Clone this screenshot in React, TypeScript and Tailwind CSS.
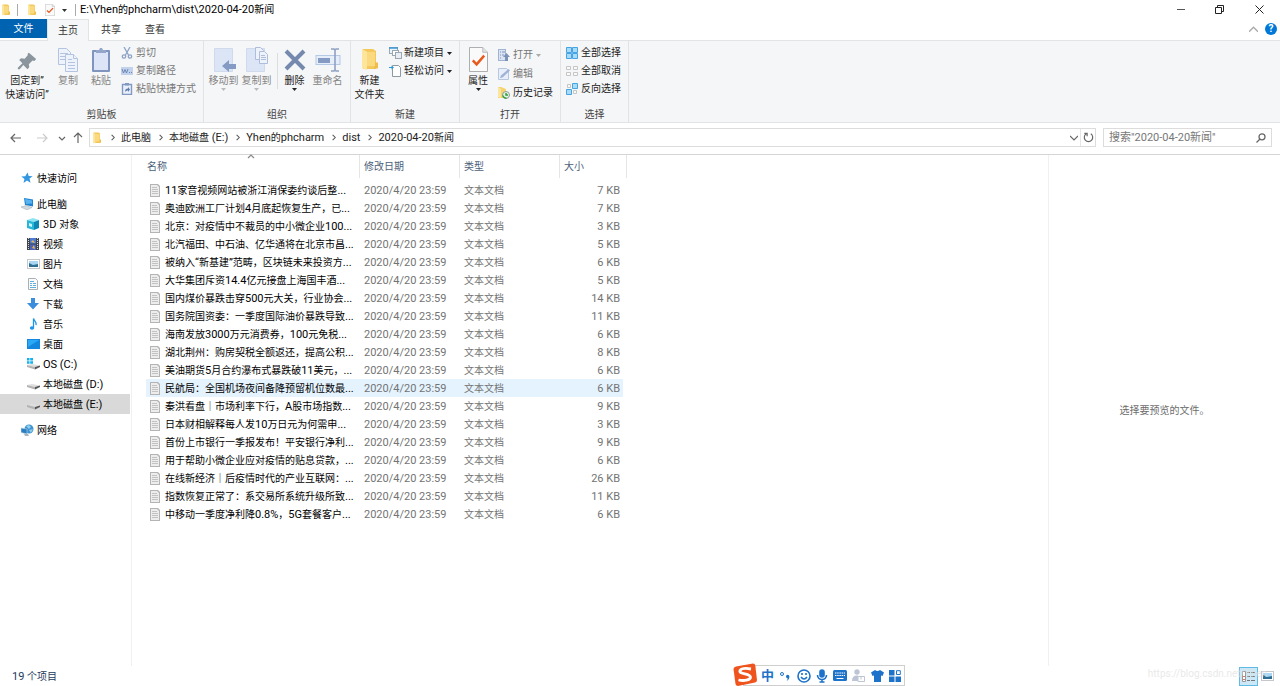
import React, { useState } from 'react';

interface FileRow {
  name: string;
  size: string;
}

const files: FileRow[] = [
  { name: '11家音视频网站被浙江消保委约谈后整...', size: '7 KB' },
  { name: '奥迪欧洲工厂计划4月底起恢复生产，已...', size: '7 KB' },
  { name: '北京：对疫情中不裁员的中小微企业100...', size: '3 KB' },
  { name: '北汽福田、中石油、亿华通将在北京市昌...', size: '5 KB' },
  { name: '被纳入“新基建”范畴，区块链未来投资方...', size: '6 KB' },
  { name: '大华集团斥资14.4亿元接盘上海国丰酒...', size: '5 KB' },
  { name: '国内煤价暴跌击穿500元大关，行业协会...', size: '14 KB' },
  { name: '国务院国资委：一季度国际油价暴跌导致...', size: '11 KB' },
  { name: '海南发放3000万元消费券，100元免税...', size: '6 KB' },
  { name: '湖北荆州：购房契税全额返还，提高公积...', size: '8 KB' },
  { name: '美油期货5月合约瀑布式暴跌破11美元，...', size: '6 KB' },
  { name: '民航局：全国机场夜间备降预留机位数最...', size: '6 KB' },
  { name: '秦洪看盘｜市场利率下行，A股市场指数...', size: '9 KB' },
  { name: '日本财相解释每人发10万日元为何需申...', size: '3 KB' },
  { name: '首份上市银行一季报发布！平安银行净利...', size: '9 KB' },
  { name: '用于帮助小微企业应对疫情的贴息贷款，...', size: '6 KB' },
  { name: '在线新经济｜后疫情时代的产业互联网：...', size: '26 KB' },
  { name: '指数恢复正常了：系交易所系统升级所致...', size: '11 KB' },
  { name: '中移动一季度净利降0.8%，5G套餐客户...', size: '6 KB' },
];

const crumbs = ['此电脑', '本地磁盘 (E:)', 'Yhen的phcharm', 'dist', '2020-04-20新闻'];

// Latin runs are set one pixel larger than the Chinese around them
const Mixed = ({ text }: { text: string }) => (
  <>
    {text.split(/([\x20-\x7e“”]+)/).map((part, i) =>
      i % 2 ? <span key={i} className="text-[11px] whitespace-pre">{part}</span> : part
    )}
  </>
);

const FolderIcon = ({ className = 'w-3 h-3' }: { className?: string }) => (
  <svg viewBox="0 0 16 24" preserveAspectRatio="none" className={className}>
    <path d="M1 1h10l3 2v19H1z" fill="#f3c75b" />
    <path d="M12 15h4v6l-4 1z" fill="#eebd4a" />
    <path d="M0 1l5 3v19l-5-2z" fill="#fde59b" />
    <path d="M5 4h8v15H5z" fill="#fad97f" />
  </svg>
);

const PinIcon = () => (
  <svg viewBox="0 0 24 24" className="w-[22px] h-[22px]" fill="#8b959d">
    <path d="M14 4l8 7-2 2-2-.5-4 4 .5 3.500-2 2-4.500-4.500L4 22H2v-1.500l5-5L3.500 12l2-2 4 .5 3.500-4-.5-1z" />
  </svg>
);

const CopyIcon = () => (
  <svg viewBox="0 0 24 26" className="w-6 h-[26px]" stroke="#b3c3e0" fill="#edf2fb">
    <path d="M2.500 1.500h8l4 4v12h-12z" />
    <path d="M4 6.500h8M4 9.500h8M4 12.500h5" />
    <path d="M9.500 7.500h8l4 4v13h-12z" />
    <path d="M17.500 7.500v4h4M12 12.500h4M12 15.500h7M12 18.500h7M12 21.500h7" />
  </svg>
);

const PasteIcon = () => (
  <svg viewBox="0 0 24 26" className="w-6 h-[26px]">
    <rect x="3" y="3" width="18" height="22" rx="1" fill="#7f95bd" />
    <rect x="5" y="5" width="14" height="18" fill="#dbe5f7" />
    <path d="M7 3h3l1-2h2l1 2h3v3H7z" fill="#94a6c9" />
  </svg>
);

const MoveToIcon = () => (
  <svg viewBox="0 0 24 26" className="w-6 h-[26px]">
    <path d="M2.500 1.500h18v23h-18z" fill="#dbe5f6" stroke="#cfdaee" />
    <path d="M10 19l7-6v4h7v5h-7v3z" fill="#859bc4" />
  </svg>
);

const CopyToIcon = () => (
  <svg viewBox="0 0 24 26" className="w-6 h-[26px]">
    <path d="M1.500 1.500h18v23h-18z" fill="#dbe5f6" stroke="#cfdaee" />
    <g stroke="#adbdda" fill="#eef3fb">
      <path d="M10.500.5h5l3 3v9h-8z" />
      <path d="M14.500 4.500h5l3 3v9h-8z" />
      <path d="M16 8.500h4M16 10.500h5M16 12.500h5" />
    </g>
  </svg>
);

const DeleteIcon = () => (
  <svg viewBox="0 0 24 26" className="w-6 h-[26px]">
    <path d="M3 4l18 18M21 4L3 22" stroke="#7588ae" strokeWidth="4" />
  </svg>
);

const RenameIcon = () => (
  <svg viewBox="0 0 26 26" className="w-[26px] h-[26px]">
    <rect x="1" y="8.500" width="24" height="9" fill="#e6eefa" stroke="#b5c8e6" />
    <rect x="3" y="11" width="12" height="5" fill="#859bc4" />
    <path d="M16 2h3l1 1 1-1h3M20 3v20M16 24h3l1-1 1 1h3" stroke="#8fa1c4" strokeWidth="1.600" fill="none" />
  </svg>
);

const CheckPageIcon = ({ className }: { className: string }) => (
  <svg viewBox="0 0 20 26" className={className} preserveAspectRatio="none">
    <path d="M.5.500h14l5 5v20H.5z" fill="#fafafa" stroke="#a9a9a9" />
    <path d="M14.500.500v5h5" fill="#e4e4e4" stroke="#b9b9b9" />
    <path d="M4 14l4 4 8-9" stroke="#e8591c" strokeWidth="2.600" fill="none" />
  </svg>
);

const ScissorsIcon = () => (
  <svg viewBox="0 0 12 12" className="w-3 h-3" fill="none" stroke="#8ea3c8" strokeWidth="1.300">
    <path d="M3 0l4.500 8M9 0L4.500 8" />
    <circle cx="3" cy="9.500" r="1.700" />
    <circle cx="9" cy="9.500" r="1.700" />
  </svg>
);

const PathIcon = () => (
  <svg viewBox="0 0 12 12" className="w-3 h-3">
    <rect y="2" width="12" height="8" fill="#c3d2ec" />
    <path d="M1 4l1.500 4L4 4.500 5.500 8 7 4M8 7.500h1M10 7.500h1" stroke="#6f87b3" fill="none" />
  </svg>
);

const ShortcutIcon = () => (
  <svg viewBox="0 0 12 12" className="w-3 h-3">
    <path d="M1.500 1.500h9v10h-9z" fill="#eaf0fa" stroke="#8399c2" strokeWidth="1.400" />
    <path d="M4 0h4v2.500H4z" fill="#8399c2" />
    <path d="M4 9c0-2.500 1-3.500 3-3.500V4l2 2.500L7 9V7.500C5.500 7.500 5 8 4 9z" fill="#5f7cb0" />
  </svg>
);

const NewItemIcon = () => (
  <svg viewBox="0 0 13 12" className="w-[13px] h-3">
    <rect x=".5" y=".5" width="8" height="6" fill="#eaf4fc" stroke="#9aa8b1" />
    <path d="M0 1h9" stroke="#3c97d4" strokeWidth="1.500" />
    <rect x="3.500" y="3.500" width="6" height="5" fill="#fff" stroke="#9aa8b1" />
    <rect x="6.500" y="5.500" width="6" height="6" fill="#e8eef4" stroke="#9aa8b1" />
  </svg>
);

const EasyAccessIcon = () => (
  <svg viewBox="0 0 13 12" className="w-[13px] h-3">
    <path d="M3.500.5h6l2 2v9h-8z" fill="#fff" stroke="#8d9aa3" />
    <path d="M0 2.500h4" stroke="#2f9bdc" />
    <path d="M2.500.5l2.500 2-2.500 2z" fill="#2f9bdc" />
  </svg>
);

const OpenIcon = () => (
  <svg viewBox="0 0 12 12" className="w-3 h-3">
    <rect x=".5" y=".5" width="7" height="11" fill="#dbe4f3" stroke="#a2b3d2" />
    <path d="M2 3h1M2 6h1M2 9h1M4 3h3M4 6h2" stroke="#7e92b8" />
    <path d="M8.500 4L12 8h-2v4H7V8H5z" fill="#7e92b8" />
  </svg>
);

const EditIcon = () => (
  <svg viewBox="0 0 12 12" className="w-3 h-3">
    <path d="M.5.500h8l2 2v9H.5z" fill="#e9effa" stroke="#b8c7e0" />
    <path d="M2 10l1-2.500L10.500 1 12 2.500 4.500 9.500z" fill="#9fb2d6" />
  </svg>
);

const HistoryIcon = () => (
  <svg viewBox="0 0 12 12" className="w-3 h-3">
    <path d="M0 0h3l5 2v9H0z" fill="#f6d36f" />
    <path d="M0 0l3 2v9l-3-1z" fill="#fbe6a0" />
    <circle cx="8" cy="8" r="3.500" fill="#e8f3e8" stroke="#8d9b8f" />
    <path d="M5 8.500A3 3 0 0 0 8.500 11M8 6v2h2" stroke="#2fa33c" strokeWidth="1.500" fill="none" />
  </svg>
);

const SelectAllIcon = () => (
  <svg viewBox="0 0 12 12" className="w-3 h-3" fill="#a9dbf8" stroke="#46a4e2">
    <path d="M.5.500h5v5h-5zM6.500.500h5v5h-5zM.5 6.500h5v5h-5zM6.500 6.500h5v5h-5z" />
  </svg>
);

const SelectNoneIcon = () => (
  <svg viewBox="0 0 12 12" className="w-3 h-3" fill="#fafafa" stroke="#c5c5c5">
    <path d="M.5 1.500h4v3h-4zM7.500 1.500h4v3h-4zM.5 7.500h4v3h-4zM7.500 7.500h4v3h-4z" />
  </svg>
);

const InvertIcon = () => (
  <svg viewBox="0 0 12 12" className="w-3 h-3">
    <path d="M1.500 1.500h3v3h-3zM7.500 7.500h3v3h-3z" fill="#fafafa" stroke="#c5c5c5" />
    <path d="M6.500.500h5v5h-5zM.5 6.500h5v5h-5z" fill="#a9dbf8" stroke="#46a4e2" />
  </svg>
);

const TextFileIcon = () => (
  <svg viewBox="0 0 10 13" className="w-[10px] h-[13px] shrink-0">
    <path d="M0 0h8l2 2v11H0z" fill="#b4b4b4" />
    <path d="M1 1h6l2 2v9H1z" fill="#ededed" />
    <path d="M2 3.500h5M2 5.500h6M2 7.500h6M2 9.500h6" stroke="#c2c2c2" />
  </svg>
);

const StarIcon = () => (
  <svg viewBox="0 0 12 12" className="w-3 h-3">
    <path d="M6.500.5l1.200 3.600 4 .2-3.200 2.300 1 4.200L6 8.500 2.500 11l1-4L.3 4.500l4-.3z" fill="#3296e0" />
  </svg>
);

const PcIcon = () => (
  <svg viewBox="0 0 13 12" className="w-[13px] h-3">
    <path d="M3 0l9 1.500v7L4 7z" fill="#1f83cf" />
    <path d="M4 1l7 1.500v3L5 6z" fill="#58b4f0" />
    <path d="M0 9l5-1.500 6 2L6 12z" fill="#d0d9df" stroke="#9aa8b3" strokeWidth=".5" />
  </svg>
);

const CubeIcon = () => (
  <svg viewBox="0 0 12 12" className="w-3 h-3">
    <path d="M0 2l6-2 6 2-5 2z" fill="#8de4f3" />
    <path d="M0 2l7 2v8L0 10z" fill="#25b6d8" />
    <path d="M7 4l5-2v8l-5 2z" fill="#0c86b4" />
    <path d="M2 5l3 1v3L2 8z" fill="#c8f3fa" />
  </svg>
);

const VideoIcon = () => (
  <svg viewBox="0 0 12 12" className="w-3 h-3">
    <rect width="12" height="12" fill="#3f4550" />
    <rect x="3" y="0" width="6" height="5.500" fill="#4d7bd0" />
    <rect x="3" y="6.500" width="6" height="5.500" fill="#4a63b8" />
    <path d="M4 4l2-2 2 3zM5 10l2-3 1 4z" fill="#e8b74a" />
    <path d="M1.500 0v12M10.500 0v12" stroke="#d5d8dd" strokeDasharray="1 1" />
  </svg>
);

const PictureIcon = () => (
  <svg viewBox="0 0 13 10" className="w-[13px] h-[10px]">
    <rect x=".5" y=".5" width="12" height="9" fill="#fff" stroke="#c4c8cb" />
    <rect x="2" y="2" width="9" height="6" fill="#a8d6f3" />
    <path d="M2 4l4 2 5-1v3H2z" fill="#2f6f92" />
  </svg>
);

const DocIcon = () => (
  <svg viewBox="0 0 12 12" className="w-3 h-3">
    <path d="M1.500.5h7l2 2v9h-9z" fill="#fbfbfb" stroke="#a8b0b6" />
    <path d="M3 3.500h4M3 5.500h2M6 5.500h3M3 7.500h2M6 7.500h3M3 9.500h6" stroke="#62aede" />
  </svg>
);

const DownloadIcon = () => (
  <svg viewBox="0 0 12 12" className="w-3 h-3">
    <path d="M4 0h4v5h4l-6 6.500L0 5h4z" fill="#3b8ede" />
  </svg>
);

const MusicIcon = () => (
  <svg viewBox="0 0 12 12" className="w-3 h-3">
    <path d="M6.500 9.500V.5C7 3 10 3.500 9 7" stroke="#1e96e6" strokeWidth="1.300" fill="none" />
    <ellipse cx="5" cy="10" rx="2.200" ry="1.800" fill="#1e96e6" />
  </svg>
);

const DesktopIcon = () => (
  <svg viewBox="0 0 13 10" className="w-[13px] h-[10px]">
    <rect width="13" height="10" fill="#1387dd" />
    <path d="M1 1h11L1 8z" fill="#2ba8f6" />
  </svg>
);

const DriveIcon = ({ windows = false }: { windows?: boolean }) => (
  <svg viewBox="0 0 13 12" className="w-[13px] h-3">
    {windows && <path d="M0 0h2.500v2.500H0zM3.200 0H6v2.500H3.200zM0 3.200h2.500v2.500H0zM3.200 3.200H6v2.500H3.200z" fill="#14b0ee" />}
    <path d="M0 7l5-1 8 1.500-5 1.500z" fill="#dedede" />
    <path d="M0 7l8 2v2.500L0 9z" fill="#b3b3b3" />
    <path d="M8 9l5-1.500V9l-5 2.500z" fill="#575757" />
  </svg>
);

const NetworkIcon = () => (
  <svg viewBox="0 0 13 12" className="w-[13px] h-3">
    <circle cx="8" cy="5" r="4.500" fill="#3d93cf" />
    <path d="M5 2l3-1 2 2-2 2zM8 6l4-1-2 4z" fill="#8fcdee" />
    <path d="M0 4l6 1v5L0 8.500z" fill="#2a7fc2" stroke="#bcd3e2" strokeWidth=".6" />
    <path d="M3 10h4l1 2H4z" fill="#a9b5bd" />
  </svg>
);

const Chevron = ({ d, className = 'w-2 h-2 text-[#666]' }: { d: string; className?: string }) => (
  <svg viewBox="0 0 8 8" className={className} fill="none" stroke="currentColor" strokeWidth="1.200">
    <path d={d} />
  </svg>
);

const Caret = ({ className = 'text-[#333]' }: { className?: string }) => (
  <svg viewBox="0 0 5 3" className={`w-[5px] h-[3px] ${className}`} fill="currentColor">
    <path d="M0 0h5L2.500 3z" />
  </svg>
);

interface BigButtonProps {
  icon: React.ReactNode;
  lines: string[];
  width: string;
  muted?: boolean;
  caret?: boolean;
}

const BigButton = ({ icon, lines, width, muted, caret }: BigButtonProps) => (
  <button className={`${width} flex flex-col items-center pt-1 whitespace-nowrap ${muted ? 'text-[#858585]' : 'text-[#222]'}`}>
    <span className="h-[29px] flex items-center justify-center">{icon}</span>
    {lines.map((line) => (
      <span key={line} className="leading-[14px]">{line}</span>
    ))}
    {caret && <Caret className={muted ? 'text-[#bbb]' : 'text-[#222]'} />}
  </button>
);

const SmallButton = ({ icon, label, muted, caret }: { icon: React.ReactNode; label: string; muted?: boolean; caret?: boolean }) => (
  <button className={`h-4 flex items-center whitespace-nowrap ${muted ? 'text-[#777]' : 'text-[#222]'}`}>
    <span className="w-[15px] shrink-0">{icon}</span>
    {label}
    {caret && <span className="ml-[3px]"><Caret className={muted ? 'text-[#aaa]' : 'text-[#222]'} /></span>}
  </button>
);

const Group = ({ title, width, children }: { title: string; width: string; children: React.ReactNode }) => (
  <section className={`${width} shrink-0 flex flex-col border-r border-[#e2e3e4]`}>
    <div className="flex flex-1">{children}</div>
    <h2 className="h-[15px] leading-[15px] text-center text-[#444]">{title}</h2>
  </section>
);

const sideItems = [
  { label: '3D 对象', icon: <CubeIcon /> },
  { label: '视频', icon: <VideoIcon /> },
  { label: '图片', icon: <PictureIcon /> },
  { label: '文档', icon: <DocIcon /> },
  { label: '下载', icon: <DownloadIcon /> },
  { label: '音乐', icon: <MusicIcon /> },
  { label: '桌面', icon: <DesktopIcon /> },
  { label: 'OS (C:)', icon: <DriveIcon windows /> },
  { label: '本地磁盘 (D:)', icon: <DriveIcon /> },
  { label: '本地磁盘 (E:)', icon: <DriveIcon />, active: true },
];

const SideLink = ({ icon, label, nested, active }: { icon: React.ReactNode; label: string; nested?: boolean; active?: boolean }) => (
  <a
    href="#"
    className={`h-5 mr-px flex items-center whitespace-nowrap ${nested ? 'pl-[27px]' : 'pl-[21px]'} ${active ? 'bg-[#d9d9d9]' : ''}`}
  >
    <span className="w-4 shrink-0">{icon}</span>
    <span className="leading-4 pt-[2px]"><Mixed text={label} /></span>
  </a>
);

const TitleBar = () => (
  <header className="h-[19px] flex items-center pl-[2px] text-black">
    <FolderIcon className="w-2 h-3" />
    <span className="w-px h-3 bg-[#aaa] ml-[7px] mr-[10px]" />
    <FolderIcon className="w-2 h-3" />
    <CheckPageIcon className="w-[10px] h-3 ml-[9px]" />
    <span className="ml-[7px] pt-px"><Caret /></span>
    <span className="w-px h-3 bg-[#aaa] ml-2 mr-1" />
    <h1 className="flex-1"><Mixed text="E:\Yhen的phcharm\dist\2020-04-20新闻" /></h1>
    <button aria-label="最小化" className="w-[39px] h-full flex items-center justify-center">
      <span className="w-2 h-px bg-[#555]" />
    </button>
    <button aria-label="还原" className="w-[39px] h-full flex items-center justify-center">
      <svg viewBox="0 0 9 9" className="w-[9px] h-[9px]" fill="none" stroke="#222">
        <path d="M.5 2.500h6v6h-6zM2.500 2.500v-2h6v6h-2" />
      </svg>
    </button>
    <button aria-label="关闭" className="w-[41px] h-full flex items-center justify-center">
      <svg viewBox="0 0 9 9" className="w-[9px] h-[9px]" stroke="#222">
        <path d="M.5.500l8 8M8.500.500l-8 8" />
      </svg>
    </button>
  </header>
);

const Tabs = () => (
  <div className="h-[21px] flex items-start text-[#333]">
    <button className="w-[47px] h-[19px] pt-px bg-[#0063b1] text-white">文件</button>
    <button className="w-[42px] h-[22px] bg-[#f5f6f7] border border-b-0 border-[#e2e3e4] z-10">主页</button>
    <button className="w-11 h-[22px]">共享</button>
    <button className="w-11 h-[22px]">查看</button>
    <div className="flex-1 h-5 flex items-center justify-end gap-[7px] pr-[3px]">
      <Chevron d="M0 6l4-4 4 4" className="w-[9px] h-[9px] text-[#aaa]" />
      <button aria-label="帮助" className="w-3 h-3 rounded-full bg-[#0078d7] text-white text-[10px] leading-3 font-bold">?</button>
    </div>
  </div>
);

const Ribbon = () => (
  <div className="h-[83px] flex bg-[#f5f6f7] border-y border-[#e2e3e4]">
    <Group title="剪贴板" width="w-[204px]">
      <BigButton icon={<PinIcon />} lines={['固定到”', '快速访问”']} width="w-[54px]" />
      <BigButton icon={<CopyIcon />} lines={['复制']} width="w-7" muted />
      <BigButton icon={<PasteIcon />} lines={['粘贴']} width="w-[38px]" muted />
      <div className="flex flex-col gap-[2px] pt-1 pl-px">
        <SmallButton icon={<ScissorsIcon />} label="剪切" muted />
        <SmallButton icon={<PathIcon />} label="复制路径" muted />
        <SmallButton icon={<ShortcutIcon />} label="粘贴快捷方式" muted />
      </div>
    </Group>
    <Group title="组织" width="w-[147px]">
      <div className="flex pl-[3px]">
        <BigButton icon={<MoveToIcon />} lines={['移动到']} width="w-[33px]" muted caret />
        <BigButton icon={<CopyToIcon />} lines={['复制到']} width="w-[33px]" muted caret />
        <span className="w-px h-9 mt-3 ml-1 bg-[#dcdddf]" />
        <BigButton icon={<DeleteIcon />} lines={['删除']} width="w-[33px]" caret />
        <BigButton icon={<RenameIcon />} lines={['重命名']} width="w-[33px]" muted />
      </div>
    </Group>
    <Group title="新建" width="w-[109px]">
      <BigButton icon={<FolderIcon className="w-4 h-[23px]" />} lines={['新建', '文件夹']} width="w-[37px]" />
      <div className="flex flex-col gap-[2px] pt-1 pl-px">
        <SmallButton icon={<NewItemIcon />} label="新建项目" caret />
        <SmallButton icon={<EasyAccessIcon />} label="轻松访问" caret />
      </div>
    </Group>
    <Group title="打开" width="w-[101px]">
      <BigButton icon={<CheckPageIcon className="w-[19px] h-[25px]" />} lines={['属性']} width="w-9" caret />
      <div className="flex flex-col gap-[3px] pt-[6px] pl-[2px]">
        <SmallButton icon={<OpenIcon />} label="打开" muted caret />
        <SmallButton icon={<EditIcon />} label="编辑" muted />
        <SmallButton icon={<HistoryIcon />} label="历史记录" />
      </div>
    </Group>
    <Group title="选择" width="w-[68px]">
      <div className="flex flex-col gap-[2px] pt-1 pl-[5px]">
        <SmallButton icon={<SelectAllIcon />} label="全部选择" />
        <SmallButton icon={<SelectNoneIcon />} label="全部取消" />
        <SmallButton icon={<InvertIcon />} label="反向选择" />
      </div>
    </Group>
  </div>
);

const ArrowIcon = ({ d, className }: { d: string; className: string }) => (
  <svg viewBox="0 0 12 12" className={`w-3 h-3 ${className}`} fill="none" stroke="currentColor" strokeWidth="1.200">
    <path d={d} />
  </svg>
);

const AddressBar = () => {
  const [query, setQuery] = useState('');

  return (
    <div className="h-8 flex items-center pl-[10px] pr-2 pb-[2px] border-b border-[#d5d5d5] text-[#222]">
      <button aria-label="后退"><ArrowIcon d="M11 6H1M5 2L1 6l4 4" className="text-[#666]" /></button>
      <button aria-label="前进" className="ml-[14px]"><ArrowIcon d="M1 6h10M7 2l4 4-4 4" className="text-[#ccc]" /></button>
      <button aria-label="最近浏览的位置" className="ml-[10px]"><Chevron d="M1 3l3 3 3-3" /></button>
      <button aria-label="上移" className="ml-[6px]"><ArrowIcon d="M6 11V1M2 5l4-4 4 4" className="text-[#666]" /></button>
      <div className="flex-1 h-[19px] ml-[5px] flex items-center border border-[#dcdcdc] pl-[3px]">
        <FolderIcon className="w-2 h-3 mr-[2px]" />
        {crumbs.map((crumb) => (
          <React.Fragment key={crumb}>
            <span className="w-[18px] flex justify-center"><Chevron d="M3 1l3 3-3 3" className="w-[7px] h-[7px] text-[#555]" /></span>
            <a href="#"><Mixed text={crumb} /></a>
          </React.Fragment>
        ))}
        <button aria-label="历史地址" className="ml-auto mr-[2px]"><Chevron d="M0 2l4 4 4-4" /></button>
        <button aria-label="刷新" className="w-[15px] h-full flex items-center justify-center border-l border-[#e5e5e5]">
          <svg viewBox="0 0 12 12" className="w-[11px] h-[11px]" fill="none" stroke="#666" strokeWidth="1.300">
            <path d="M8.500 2a4.600 4.600 0 1 1-5 0M1.500 1.500h3v3" />
          </svg>
        </button>
      </div>
      <div className="w-[169px] h-[19px] ml-[7px] flex items-center border border-[#dcdcdc] px-[5px]">
        <input
          type="search"
          aria-label="搜索"
          placeholder={'搜索"2020-04-20新闻"'}
          value={query}
          onChange={(e) => setQuery(e.target.value)}
          className="flex-1 min-w-0 outline-none text-[11px] placeholder:text-[#777]"
        />
        <svg viewBox="0 0 10 10" className="w-[10px] h-[10px]" fill="none" stroke="#666" strokeWidth="1.300">
          <circle cx="6" cy="3.800" r="3" />
          <path d="M4 6L.5 9.500" />
        </svg>
      </div>
    </div>
  );
};

const Sidebar = () => (
  <nav className="w-[132px] shrink-0 border-r border-[#f0f0f0] pt-[13px] flex flex-col gap-[6px] text-black">
    <SideLink icon={<StarIcon />} label="快速访问" />
    <div>
      <SideLink icon={<PcIcon />} label="此电脑" />
      {sideItems.map((item) => (
        <SideLink key={item.label} {...item} nested />
      ))}
    </div>
    <SideLink icon={<NetworkIcon />} label="网络" />
  </nav>
);

const FileTable = () => {
  const [hovered, setHovered] = useState(11);
  const th = 'h-[23px] p-0 pl-1 font-normal text-left border-r border-[#e5e5e5]';

  return (
    <table className="w-[481px] table-fixed border-separate border-spacing-0 text-[#737373]">
      <thead className="text-[#4c607a]">
        <tr>
          <th className="w-[214px] h-[23px] p-0 pl-px font-normal text-left border-r border-[#e5e5e5] relative">
            名称
            <span className="absolute left-[101px] -top-px"><Chevron d="M1 4l3-3 3 3" className="w-2 h-2 text-[#888]" /></span>
          </th>
          <th className={`w-[100px] ${th}`}>修改日期</th>
          <th className={`w-[100px] ${th}`}>类型</th>
          <th className={`w-[67px] ${th}`}>大小</th>
        </tr>
      </thead>
      <tbody>
        <tr aria-hidden="true"><td colSpan={4} className="h-[3px] p-0" /></tr>
        {files.map((file, i) => (
          <tr key={file.name} onMouseEnter={() => setHovered(i)} className={hovered === i ? '[&>td]:bg-[#e5f3ff]' : ''}>
            <td className="h-[18px] p-0 pl-1 text-black">
              <div className="flex items-center gap-[5px] whitespace-nowrap">
                <TextFileIcon />
                <span className="leading-4 pt-[2px]"><Mixed text={file.name} /></span>
              </div>
            </td>
            <td className="p-0 pt-[2px] pl-1 leading-4 whitespace-nowrap"><Mixed text="2020/4/20 23:59" /></td>
            <td className="p-0 pt-[2px] pl-1 leading-4">文本文档</td>
            <td className="p-0 pt-[2px] pr-[3px] leading-4 text-right border-r-4 border-transparent bg-clip-padding"><Mixed text={file.size} /></td>
          </tr>
        ))}
      </tbody>
    </table>
  );
};

const StatusBar = () => (
  <footer className="h-5 flex items-center pl-3 pr-[6px] text-[#1e395b]">
    <span className="flex-1 leading-4 pt-[2px]"><Mixed text="19 个项目" /></span>
    <button aria-label="详细信息" className="w-[19px] h-[19px] flex items-center justify-center bg-[#cce8f6] border border-[#5fbbe4]">
      <svg viewBox="0 0 13 11" className="w-[13px] h-[11px]">
        <path d="M.5.500h3v10h-3z" fill="#fff" stroke="#999" />
        <path d="M1 5.500h2M1 8.500h2" stroke="#d67b6a" />
        <path d="M5 1.500h3M9 1.500h4M5 5.500h3M9 5.500h4M5 9.500h3M9 9.500h4" stroke="#777" />
      </svg>
    </button>
    <button aria-label="大图标" className="ml-[3px]"><PictureIcon /></button>
  </footer>
);

const InputMethodBar = () => (
  <div className="absolute bottom-0 right-[375px] w-[172px] h-[23px] flex items-center text-[#1d72c9]">
    <div className="absolute left-[10px] right-0 top-[2px] h-[21px] bg-white border border-[#cfcfcf]" />
    <svg viewBox="0 0 24 24" className="relative w-6 h-6 shrink-0">
      <path d="M3 3.500L20 .5q2 0 2.300 2L24 17q0 2-2 2.600L5 23q-2 0-2.500-2L.5 6q0-2 2.500-2.500z" fill="#f0541e" />
      <path d="M18 6q-9-1.500-11 1.500c-1.500 4 10.500 2.500 10.500 6.500 0 3.500-7 4-12 3" stroke="#fff" strokeWidth="2.800" fill="none" />
    </svg>
    <div className="relative flex-1 flex items-center justify-between pl-1 pr-1 pt-[2px]">
      <button className="text-[13px] leading-4 font-bold">中</button>
      <svg viewBox="0 0 12 12" className="w-3 h-3" fill="currentColor">
        <circle cx="3" cy="4" r="1.500" fill="none" stroke="currentColor" />
        <path d="M7 6.500a1.700 1.700 0 1 1 3.400 0c0 2-1 3.500-2.900 4.500 1-1.300 1.200-2 1-2.800Q7 8 7 6.500z" />
      </svg>
      <svg viewBox="0 0 14 14" className="w-[14px] h-[14px]" fill="none" stroke="currentColor" strokeWidth="1.600">
        <circle cx="7" cy="7" r="6" />
        <path d="M4 8q3 4 6 0M5 4v2M9 4v2" />
      </svg>
      <svg viewBox="0 0 12 14" className="w-3 h-[14px]" fill="none" stroke="currentColor" strokeWidth="1.600">
        <rect x="4" y="1" width="4" height="7" rx="2" fill="currentColor" />
        <path d="M1.500 6c0 6 9 6 9 0M6 10.500V13M3.500 13h5" />
      </svg>
      <svg viewBox="0 0 14 11" className="w-[14px] h-[11px]">
        <rect width="14" height="11" rx="1.500" fill="currentColor" />
        <path d="M2 3h10M2 5.500h10" stroke="#fff" strokeDasharray="1.500 .7" />
        <path d="M3.500 8.500h7" stroke="#fff" />
      </svg>
      <svg viewBox="0 0 13 13" className="w-[13px] h-[13px]" fill="#bcc5d3">
        <circle cx="5" cy="3" r="2.700" />
        <path d="M0 12q0-5.500 5-5.500h1V12z" />
        <path d="M6 7.500h6.500v5H6zM9 7.500v3" stroke="#bcc5d3" fill="#fff" />
      </svg>
      <svg viewBox="0 0 13 12" className="w-[13px] h-3" fill="currentColor">
        <path d="M4 0q2.500 2 5 0l4 2.500-1.500 3.500L10 5.500V12H3V5.500L1.500 6 0 2.500z" />
      </svg>
      <svg viewBox="0 0 12 12" className="w-3 h-3" fill="currentColor">
        <path d="M0 0h5.500v5.500H0zM0 6.500h5.500V12H0zM6.500 6.500H12V12H6.500z" />
        <path d="M7.500.700h3.800v3.800H7.500z" fill="none" stroke="currentColor" />
      </svg>
    </div>
  </div>
);

export default function App() {
  return (
    <div className="relative min-h-screen flex flex-col bg-white overflow-hidden text-[10px] leading-[14px] font-[Roboto,'Noto_Sans_CJK_SC',sans-serif]">
      <TitleBar />
      <Tabs />
      <Ribbon />
      <AddressBar />
      <div className="flex-1 flex">
        <Sidebar />
        <main className="flex-1 pl-[14px]">
          <FileTable />
        </main>
        <aside className="w-[232px] shrink-0 flex items-center justify-center border-l border-[#f0f0f0] text-[#6d6d6d]">
          选择要预览的文件。
        </aside>
      </div>
      <StatusBar />
      <p className="absolute bottom-[5px] right-[13px] whitespace-nowrap text-[10px] text-[#dedede]/70">
        https://blog.csdn.net/Yhen
      </p>
      <InputMethodBar />
    </div>
  );
}
